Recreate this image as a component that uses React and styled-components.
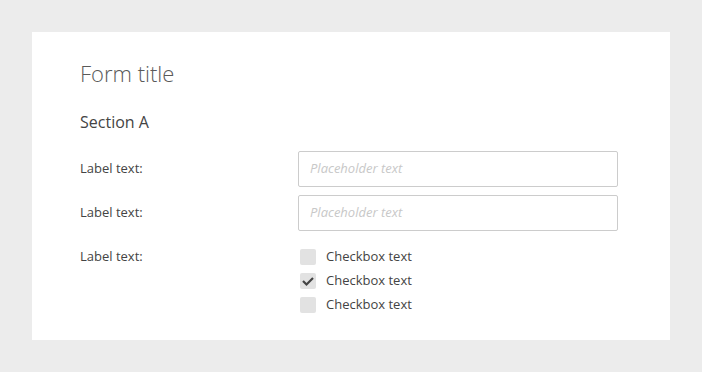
import React from 'react'
import styled, { createGlobalStyle } from 'styled-components'

const GlobalStyle = createGlobalStyle`
html, body {
  margin: 0;
  background: #ececec;
  font-family: "Open Sans", "Liberation Sans", sans-serif;
  color: #444;
}
`

const rows = [
  { label: 'Label text:', type: 'input' },
  { label: 'Label text:', type: 'input' },
  { label: 'Label text:', type: 'checks' },
]

const checks = [false, true, false]

export default () => (
  <>
    <GlobalStyle />
    <Page>
      <Card>
        <Title>Form title</Title>
        <Section>Section A</Section>
        <Rows>
          {rows.map((row, i) => (
            <Row key={i}>
              <Label>{row.label}</Label>
              {row.type === 'input' ? (
                <Input placeholder="Placeholder text" />
              ) : (
                <Checks>
                  {checks.map((on, j) => (
                    <CheckRow key={j}>
                      <Box>
                        {on && (
                          <svg width="16" height="16" viewBox="0 0 16 16">
                            <path d="M3 8 L6.5 11.5 L13 5" fill="none" stroke="#444" strokeWidth="2.2" />
                          </svg>
                        )}
                      </Box>
                      <CheckText>Checkbox text</CheckText>
                    </CheckRow>
                  ))}
                </Checks>
              )}
            </Row>
          ))}
        </Rows>
      </Card>
    </Page>
  </>
)

const Page = styled.div`
padding: 32px;
`

const Card = styled.div`
width: 638px;
height: 308px;
box-sizing: border-box;
background: #fff;
padding: 26px 48px;
`

const Title = styled.h1`
margin: 0;
font-size: 22px;
font-weight: 300;
line-height: 30px;
color: #5a5a5a;
`

const Section = styled.h2`
margin: 23px 0 0;
font-size: 16px;
font-weight: 400;
line-height: 22px;
color: #444;
`

const Rows = styled.div`
display: flex;
flex-direction: column;
gap: 8px;
margin-top: 18px;
`

const Row = styled.div`
display: flex;
align-items: flex-start;
`

const Label = styled.div`
width: 218px;
flex: none;
font-size: 13px;
line-height: 34px;
color: #444;
`

const Input = styled.input`
width: 320px;
height: 36px;
box-sizing: border-box;
border: 1px solid #ccc;
border-radius: 2px;
padding: 0 11px 2px;
font-family: inherit;
font-size: 13px;
color: #444;
outline: none;
&::placeholder {
  color: #c8c8c8;
  font-style: italic;
}
`

const Checks = styled.div`
display: flex;
flex-direction: column;
gap: 8px;
padding: 10px 0 0 2px;
`

const CheckRow = styled.label`
display: flex;
align-items: center;
gap: 10px;
height: 16px;
font-size: 13px;
line-height: 16px;
color: #444;
`

const CheckText = styled.span`
padding-bottom: 2px;
`

const Box = styled.span`
width: 16px;
height: 16px;
border-radius: 2px;
background: #e2e2e2;
display: flex;
align-items: center;
justify-content: center;
`
